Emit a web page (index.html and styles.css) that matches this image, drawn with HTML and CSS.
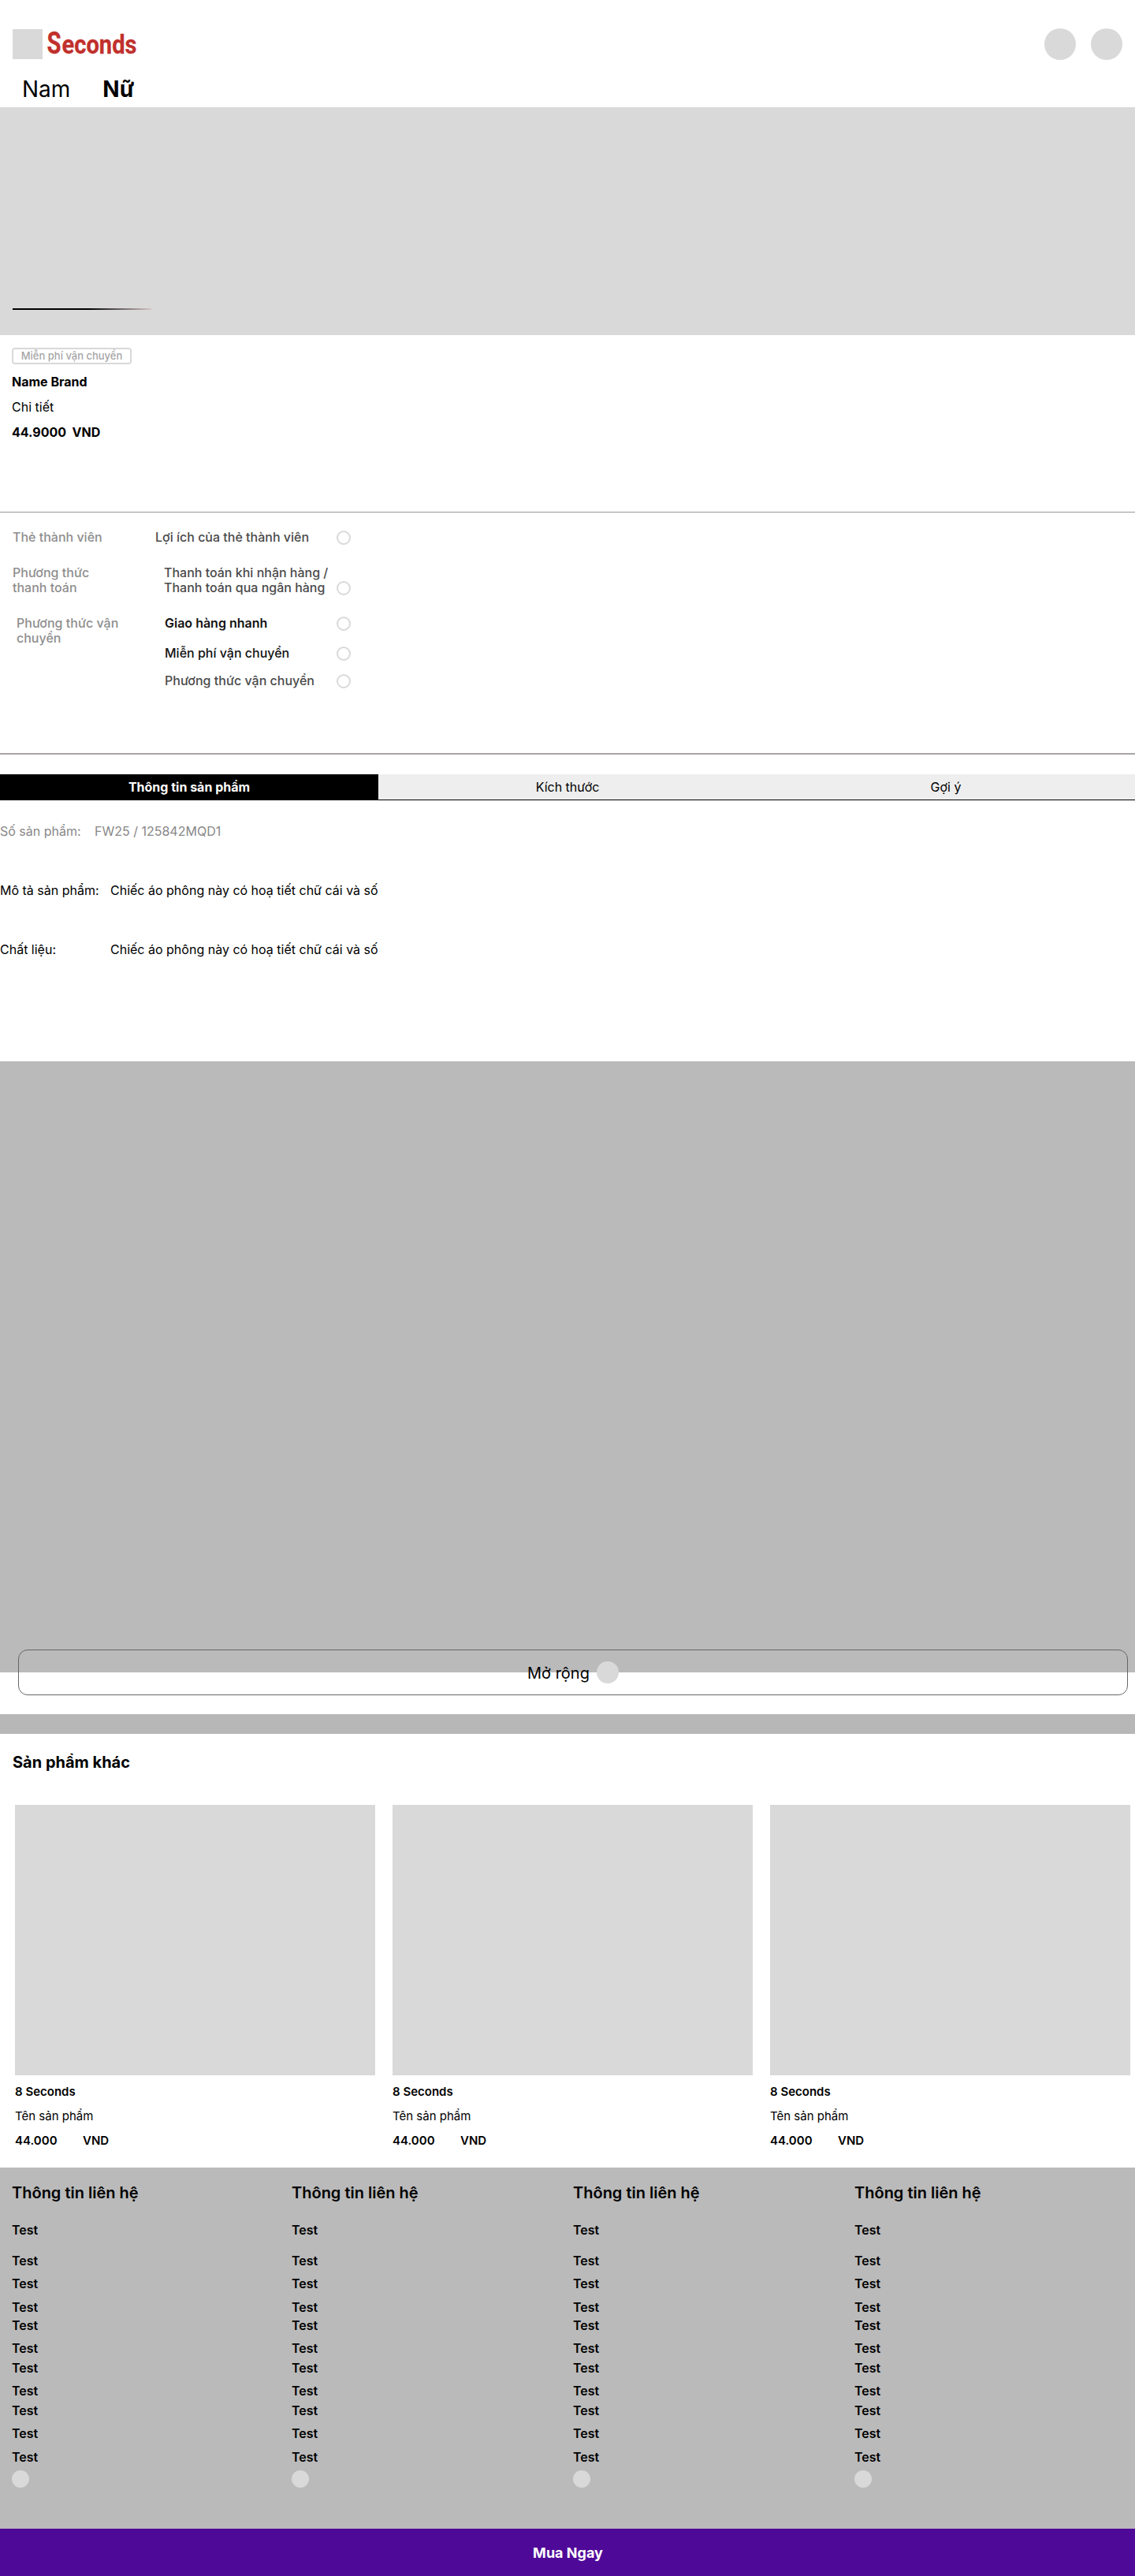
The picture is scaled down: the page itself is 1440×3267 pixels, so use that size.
FILE: index.html
```html
<!DOCTYPE html>
<html lang="vi">
<head>
<meta charset="utf-8">
<title>8 Seconds</title>
<link rel="stylesheet" href="styles.css">
</head>
<body>
<header class="header">
  <div class="topbar">
    <div class="brand">
      <div class="brand-mark"></div>
      <svg class="brand-name" width="120" height="52" viewBox="0 0 120 52">
        <text class="brand-cap" x="-0.5" y="38" textLength="18" lengthAdjust="spacingAndGlyphs">S</text>
        <text class="brand-rest" x="18.5" y="38" textLength="95" lengthAdjust="spacingAndGlyphs">econds</text>
      </svg>
    </div>
    <div class="actions"><span class="action"></span><span class="action"></span></div>
  </div>
  <nav class="gender"><a class="gender-link">Nam</a><a class="gender-link active">Nữ</a></nav>
</header>

<section class="banner"><div class="banner-progress"></div></section>

<section class="summary">
  <span class="badge">Miễn phí vận chuyển</span>
  <h1 class="summary-line strong">Name Brand</h1>
  <p class="summary-line">Chi tiết</p>
  <p class="summary-line strong price">44.9000&nbsp; VND</p>
</section>

<section class="options">
  <div class="option-row member">
    <div class="option-label">Thẻ thành viên</div>
    <div class="option-list"><div class="option"><span>Lợi ích của thẻ thành viên</span><i class="radio"></i></div></div>
  </div>
  <div class="option-row payment">
    <div class="option-label">Phương thức<br>thanh toán</div>
    <div class="option-list"><div class="option"><span>Thanh toán khi nhận hàng /<br>Thanh toán qua ngân hàng</span><i class="radio"></i></div></div>
  </div>
  <div class="option-row shipping">
    <div class="option-label">Phương thức vận<br>chuyển</div>
    <div class="option-list">
      <div class="option fast"><span>Giao hàng nhanh</span><i class="radio"></i></div>
      <div class="option free"><span>Miễn phí vận chuyển</span><i class="radio"></i></div>
      <div class="option"><span>Phương thức vận chuyển</span><i class="radio"></i></div>
    </div>
  </div>
</section>

<nav class="tabs">
  <a class="tab active">Thông tin sản phẩm</a>
  <a class="tab">Kích thước</a>
  <a class="tab">Gợi ý</a>
</nav>

<section class="details">
  <div class="detail muted"><span class="detail-label">Số sản phẩm:</span><span>FW25 / 125842MQD1</span></div>
  <div class="detail"><span class="detail-label">Mô tả sản phẩm:</span><span>Chiếc áo phông này có hoạ tiết chữ cái và số</span></div>
  <div class="detail"><span class="detail-label">Chất liệu:</span><span>Chiếc áo phông này có hoạ tiết chữ cái và số</span></div>
</section>

<section class="gallery"></section>
<div class="expand-wrap"><a class="expand"><span class="expand-text">Mở rộng</span><i class="expand-icon"></i></a></div>
<div class="divider"></div>

<section class="related">
  <h2 class="related-title">Sản phẩm khác</h2>
  <div class="cards">
    <article class="card"><div class="card-image"></div><h3 class="card-line strong">8 Seconds</h3><p class="card-line">Tên sản phẩm</p><p class="card-line strong"><span class="amount">44.000</span>VND</p></article>
    <article class="card"><div class="card-image"></div><h3 class="card-line strong">8 Seconds</h3><p class="card-line">Tên sản phẩm</p><p class="card-line strong"><span class="amount">44.000</span>VND</p></article>
    <article class="card"><div class="card-image"></div><h3 class="card-line strong">8 Seconds</h3><p class="card-line">Tên sản phẩm</p><p class="card-line strong"><span class="amount">44.000</span>VND</p></article>
  </div>
</section>

<footer class="footer">
  <div class="footer-col"><h4 class="footer-title">Thông tin liên hệ</h4><ul class="links"><li>Test</li><li>Test</li><li>Test</li><li>Test</li><li>Test</li><li>Test</li><li>Test</li><li>Test</li><li>Test</li><li>Test</li><li>Test</li></ul><i class="social"></i></div>
  <div class="footer-col"><h4 class="footer-title">Thông tin liên hệ</h4><ul class="links"><li>Test</li><li>Test</li><li>Test</li><li>Test</li><li>Test</li><li>Test</li><li>Test</li><li>Test</li><li>Test</li><li>Test</li><li>Test</li></ul><i class="social"></i></div>
  <div class="footer-col"><h4 class="footer-title">Thông tin liên hệ</h4><ul class="links"><li>Test</li><li>Test</li><li>Test</li><li>Test</li><li>Test</li><li>Test</li><li>Test</li><li>Test</li><li>Test</li><li>Test</li><li>Test</li></ul><i class="social"></i></div>
  <div class="footer-col"><h4 class="footer-title">Thông tin liên hệ</h4><ul class="links"><li>Test</li><li>Test</li><li>Test</li><li>Test</li><li>Test</li><li>Test</li><li>Test</li><li>Test</li><li>Test</li><li>Test</li><li>Test</li></ul><i class="social"></i></div>
</footer>

<div class="buy">Mua Ngay</div>
</body>
</html>
```
FILE: styles.css
```css
* { box-sizing: border-box; margin: 0; padding: 0; }

body {
  width: 1440px;
  background: #fff;
  color: #000;
  font: 400 16px/20px Inter, "Noto Sans", sans-serif;
}

.header { height: 136px; padding: 36px 16px 0; }
.topbar { display: flex; justify-content: space-between; height: 40px; align-items: center; }
.brand { display: flex; gap: 6px; height: 38px; }
.brand-mark { width: 38px; height: 38px; background: #d9d9d9; }
.brand-name { display: block; margin-top: -7px; overflow: visible; fill: #c1302c; stroke: #c1302c; stroke-width: .3px; font-family: Roboto, sans-serif; font-weight: 700; }
.brand-cap { font-size: 39px; }
.brand-rest { font-size: 34px; }
.actions { display: flex; gap: 19px; }
.action { width: 40px; height: 40px; border-radius: 50%; background: #d9d9d9; }
.gender { display: flex; gap: 41px; padding: 20px 0 0 12px; font-size: 28px; line-height: 34px; }
.gender-link.active { font-weight: 700; }

.banner { display: flex; align-items: flex-end; height: 289px; padding: 0 16px 32px; background: #d9d9d9; }
.banner-progress { width: 176px; height: 2px; background: linear-gradient(90deg, #000 55%, #d5c6c6); }

.summary { display: flex; flex-direction: column; align-items: flex-start; height: 225px; padding: 16px 14px 0 15px; border-bottom: 1px solid #999; }
.badge { width: 152px; height: 21px; margin-bottom: 12px; border: 2px solid #d9d9d9; border-radius: 4px; color: #a6a6a6; font-size: 13px; font-weight: 500; line-height: 17px; text-align: center; }
.summary-line { height: 32px; font-size: 16px; font-weight: 400; }
.summary-line.strong { font-weight: 700; }

.options { height: 307px; padding: 22px 16px 0; border-bottom: 2px solid #aaa5a5; font-weight: 500; line-height: 19px; }
.option-row { display: flex; color: #8e8e8e; }
.option-label { width: 181px; }
.option-list { width: 248px; color: #4a4a4a; }
.option { display: flex; justify-content: space-between; align-items: flex-end; }
.radio { width: 18px; height: 18px; margin-top: 1px; border: 2px solid #d9d9d9; border-radius: 50%; }
.member { height: 45px; }
.payment { height: 64px; }
.payment .option-label { width: 192px; }
.payment .option-list, .shipping .option-list { width: 237px; }
.shipping { padding-left: 5px; }
.shipping .option-label { width: 188px; }
.shipping .option-list { width: 236px; }
.fast { height: 38px; align-items: flex-start; color: #111; font-weight: 600; }
.free { height: 35px; align-items: flex-start; color: #111; }

.tabs { display: grid; grid-template-columns: repeat(3, 1fr); height: 33px; margin-top: 25px; border-bottom: 1px solid #000; background: #eee; }
.tab { padding-top: 6px; text-align: center; }
.tab.active { background: #000; color: #fff; font-weight: 700; }

.details { height: 331px; padding-top: 29px; }
.detail { display: flex; height: 75px; }
.detail-label { width: 140px; }
.detail.muted { color: #888; }
.muted .detail-label { width: 120px; }

.gallery { height: 775px; background: #bababa; }
.expand-wrap { position: relative; height: 53px; }
/* The expand button straddles the lower edge of the gallery. */
.expand { position: absolute; left: 23px; top: -29px; display: flex; align-items: center; justify-content: center; gap: 9px; width: 1408px; height: 58px; border: 1px solid #666; border-radius: 12px; font-size: 20px; line-height: 24px; }
.expand-text { padding-top: 2px; }
.expand-icon { width: 28px; height: 28px; margin-top: -1px; border-radius: 50%; background: #d9d9d9; }
.divider { height: 25px; background: #b7b7b7; }

.related { height: 550px; padding: 24px 6px 0 16px; }
.related-title { height: 66px; font-size: 20px; font-weight: 700; line-height: 24px; }
.cards { display: grid; grid-template-columns: repeat(3, 457px); gap: 22px; padding-left: 3px; }
.card-image { height: 343px; margin-bottom: 11px; background: #d9d9d9; }
.card-line { display: flex; height: 31px; font-size: 15px; font-weight: 400; line-height: 19px; }
.card-line.strong { font-weight: 600; }
.amount { width: 86px; }

.footer { display: grid; grid-template-columns: 355px 357px 357px 1fr; height: 458px; padding: 20px 0 0 15px; background: #bababa; }
.footer-title { height: 49px; font-size: 20px; font-weight: 600; line-height: 24px; }
.links { list-style: none; height: 315px; font-weight: 600; }
.links li { height: 29px; }
.links li:nth-child(1) { height: 39px; }
.links li:nth-child(3), .links li:nth-child(10) { height: 30px; }
.links li:nth-child(4) { height: 23px; }
.links li:nth-child(6), .links li:nth-child(8) { height: 25px; }
.social { display: block; width: 22px; height: 22px; border-radius: 50%; background: #d9d9d9; }

.buy { height: 60px; padding: 20px 0 0 1px; background: #4f0999; color: #fff; font-size: 18px; font-weight: 700; line-height: 21px; text-align: center; }
```
